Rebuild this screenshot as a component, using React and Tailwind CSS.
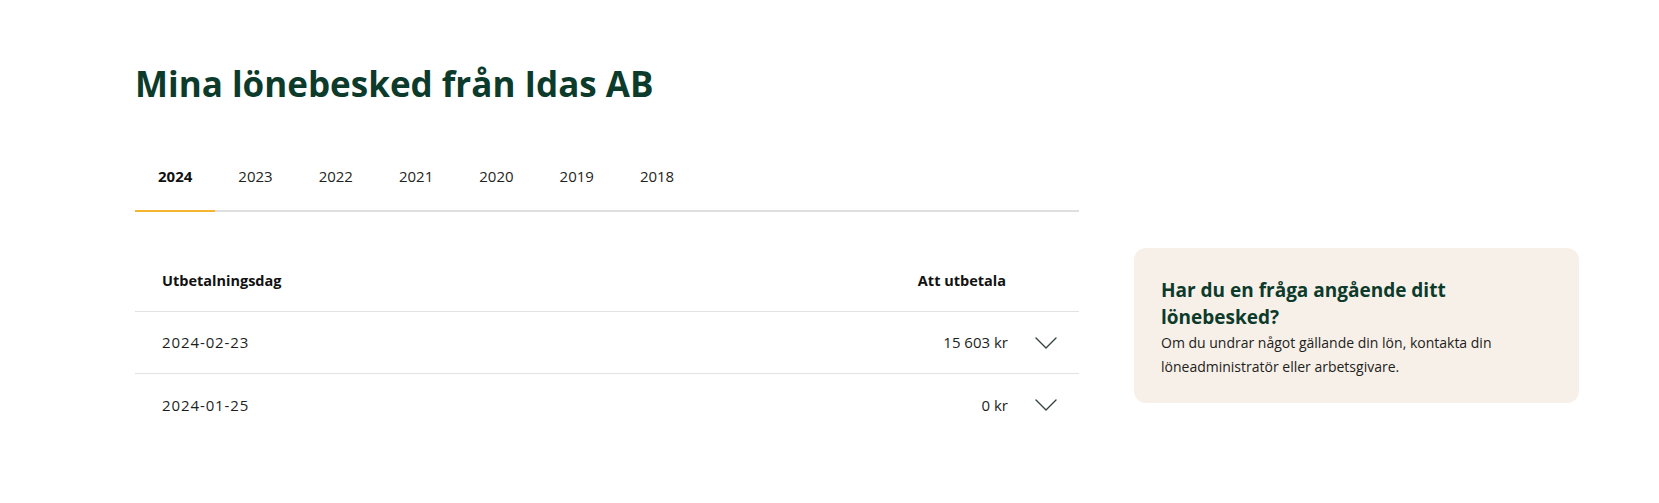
import React, { useState } from "react";

const years = ["2024", "2023", "2022", "2021", "2020", "2019", "2018"];

const payslips = [
  { date: "2024-02-23", amount: "15 603 kr" },
  { date: "2024-01-25", amount: "0 kr" },
];

function Chevron() {
  return (
    <svg width="22" height="12" viewBox="0 0 22 12" fill="none">
      <path d="M1 1L11 11L21 1" stroke="#34433f" strokeWidth="1.4" strokeLinecap="round" strokeLinejoin="round" />
    </svg>
  );
}

export default function App() {
  const [year, setYear] = useState("2024");

  return (
    <div className="min-h-[503px] bg-white text-[#1b1f1d] font-['Open_Sans','Noto_Sans',sans-serif]">
      <div className="pl-[135px] pt-[60px]">
        {/* TITLE */}
        <h1 className="text-[35px] leading-[48px] font-bold text-[#0c3a2b]">
          Mina lönebesked från Idas AB
        </h1>

        <div className="flex gap-[55px] mt-[41px]">
          {/* LEFT COLUMN */}
          <div className="w-[944px]">
            {/* TABS */}
            <div className="flex border-b-2 border-[#dde0df]">
              {years.map((y) => (
                <button
                  key={y}
                  onClick={() => setYear(y)}
                  className={`-mb-[2px] px-[23px] pt-[15px] pb-[22px] text-[15px] leading-6 border-b-2 ${
                    year === y
                      ? "border-[#f4b630] font-bold text-[#111]"
                      : "border-transparent text-[#1e2421]"
                  }`}
                >
                  {y}
                </button>
              ))}
            </div>

            {/* TABLE */}
            <div className="mt-[38px]">
              <div className="flex items-center justify-between h-[62px] pl-[27px] pr-[73px] border-b border-[#e2e4e3] text-[14.5px] font-bold text-[#111]">
                <span>Utbetalningsdag</span>
                <span>Att utbetala</span>
              </div>
              {payslips.map((p) => (
                <div
                  key={p.date}
                  className="flex items-center h-[62px] pl-[27px] pr-[22px] border-b border-[#e2e4e3] last:border-b-0 text-[15px]"
                >
                  <span className="flex-1 tracking-[0.9px]">{p.date}</span>
                  <span>{p.amount}</span>
                  <span className="ml-[27px] flex items-center">
                    <Chevron />
                  </span>
                </div>
              ))}
            </div>
          </div>

          {/* INFO CARD */}
          <div className="w-[445px] self-start mt-[99px] rounded-xl bg-[#f7f0e8] px-[27px] pt-[29px] pb-[24px]">
            <h3 className="text-[19px] leading-[27px] font-bold text-[#0c3a2b]">
              Har du en fråga angående ditt lönebesked?
            </h3>
            <p className="text-[14px] leading-6 text-[#1d2220]">
              Om du undrar något gällande din lön, kontakta din löneadministratör eller arbetsgivare.
            </p>
          </div>
        </div>
      </div>
    </div>
  );
}
